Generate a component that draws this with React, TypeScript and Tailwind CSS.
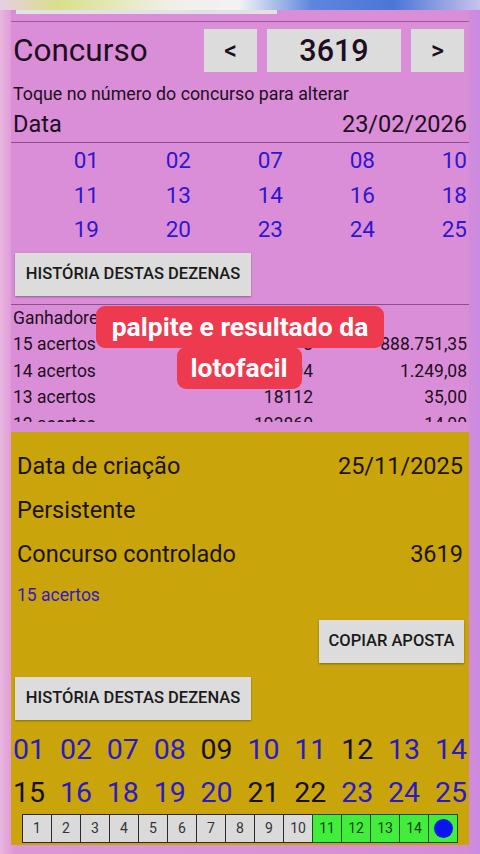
import React from "react";

const drawn = ["01", "02", "07", "08", "10", "11", "13", "14", "16", "18", "19", "20", "23", "24", "25"];

const winners = [
  { label: "15 acertos", qty: "3", prize: "888.751,35" },
  { label: "14 acertos", qty: "304", prize: "1.249,08" },
  { label: "13 acertos", qty: "18112", prize: "35,00" },
  { label: "12 acertos", qty: "193860", prize: "14,00" },
];

const firstRow = ["01", "02", "07", "08", "09", "10", "11", "12", "13", "14"];
const secondRow = ["15", "16", "18", "19", "20", "21", "22", "23", "24", "25"];

function GreyButton({ label, className }: { label: string; className: string }) {
  return (
    <div
      className={`flex items-center justify-center bg-[#dcdcdc] text-[16.5px] font-medium text-[#1a1a1a] shadow-[0_1px_2px_rgba(0,0,0,0.35)] ${className}`}
    >
      {label}
    </div>
  );
}

function NumberRow({ nums }: { nums: string[] }) {
  return (
    <div className="flex justify-between px-[2px] text-[28.5px] leading-[43px]">
      {nums.map((n) => (
        <span key={n} className={drawn.includes(n) ? "text-[#2a1bc4]" : "text-[#15100a]"}>
          {n}
        </span>
      ))}
    </div>
  );
}

export default function App() {
  return (
    <div className="relative h-[854px] w-[480px] overflow-hidden bg-[linear-gradient(90deg,#e9b6de_0%,#dc96d8_3%,#d993d6_50%,#d68bd9_97%,#c98be0_100%)] font-['Roboto',sans-serif]">
      {/* blurred top strip */}
      <div className="h-[10px] bg-[linear-gradient(90deg,#e6cfe0_0%,#d8e08a_12%,#eef0e6_35%,#f2f2f4_50%,#5f86dc_65%,#4a76d6_82%,#c9c2ee_100%)]" />

      {/* result panel */}
      <div className="mx-[11px] h-[422px] bg-[#db8ed8] text-[#1d0e20]">
        <div className="ml-[5px] h-[4px] w-[261px] bg-[#e4e0e4]" />
        <div className="mt-[7px] h-[1px] bg-[#a35a9e]" />

        <div className="mt-[7px] flex h-[43px] items-center pr-[5px]">
          <span className="pl-[2px] text-[31.5px] leading-none">Concurso</span>
          <div className="ml-auto flex gap-[10px]">
            <div className="flex h-[43px] w-[53px] items-center justify-center bg-[#dcdcdc] text-[25px] font-medium">
              &lt;
            </div>
            <div className="flex h-[43px] w-[134px] items-center justify-center bg-[#dcdcdc] text-[30.5px] font-medium">
              3619
            </div>
            <div className="flex h-[43px] w-[53px] items-center justify-center bg-[#dcdcdc] text-[25px] font-medium">
              &gt;
            </div>
          </div>
        </div>

        <div className="mt-[11px] h-[22px] whitespace-nowrap pl-[2px] text-[17.8px] leading-[22px]">
          Toque no número do concurso para alterar
        </div>

        <div className="mt-[7px] flex h-[26px] items-center justify-between pl-[2px] pr-[2px] text-[23.5px]">
          <span>Data</span>
          <span>23/02/2026</span>
        </div>

        <div className="mt-[4px] h-[1px] bg-[#8f4f8c]" />

        <div className="flex flex-wrap pl-[4px] text-[22.5px] leading-[34.5px] text-[#3116cc]">
          {drawn.map((n, i) => (
            <span key={n} className={`text-right ${i % 5 === 0 ? "w-[84px]" : "w-[92px]"}`}>
              {n}
            </span>
          ))}
        </div>

        <GreyButton label="HISTÓRIA DESTAS DEZENAS" className="ml-[4px] mt-[6px] h-[43px] w-[236px]" />

        <div className="mt-[8px] h-[1px] bg-[#8f4f8c]" />

        <div className="h-[117px] overflow-hidden pl-[2px] pr-[2px] text-[17.5px] leading-[26.5px]">
          <div>Ganhadores</div>
          {winners.map((w) => (
            <div key={w.label} className="flex">
              <span className="w-[160px]">{w.label}</span>
              <span className="w-[140px] text-right">{w.qty}</span>
              <span className="flex-1 text-right">{w.prize}</span>
            </div>
          ))}
        </div>
      </div>

      {/* bet panel */}
      <div className="mx-[11px] h-[413px] bg-[#c9a40a] pt-[20px] text-[#1c1408]">
        <div className="flex h-[30px] items-center justify-between px-[6px] text-[23.5px]">
          <span>Data de criação</span>
          <span>25/11/2025</span>
        </div>
        <div className="mt-[14px] flex h-[30px] items-center px-[6px] text-[23.5px]">Persistente</div>
        <div className="mt-[14px] flex h-[30px] items-center justify-between px-[6px] text-[23.5px]">
          <span>Concurso controlado</span>
          <span>3619</span>
        </div>
        <div className="mt-[15px] h-[20px] px-[6px] text-[17.5px] leading-[20px] text-[#3418c4]">15 acertos</div>

        <div className="mt-[15px] flex justify-end pr-[5px]">
          <GreyButton label="COPIAR APOSTA" className="h-[43px] w-[145px]" />
        </div>
        <GreyButton label="HISTÓRIA DESTAS DEZENAS" className="ml-[4px] mt-[14px] h-[43px] w-[236px]" />

        <div className="mt-[8px]">
          <NumberRow nums={firstRow} />
          <NumberRow nums={secondRow} />
        </div>

        <div className="ml-[11px] flex">
          {Array.from({ length: 15 }, (_, i) => i + 1).map((n) => (
            <div
              key={n}
              className={`-ml-[1px] flex h-[29px] w-[30px] items-center justify-center border text-[14px] first:ml-0 ${
                n > 10 ? "border-[#1e4a1e] bg-[#41ee3c] text-[#143a14]" : "border-[#2a2a2a] bg-[#dadada] text-[#333]"
              }`}
            >
              {n === 15 ? <span className="h-[19px] w-[19px] rounded-full bg-[#0a14f0]" /> : n}
            </div>
          ))}
        </div>
      </div>

      {/* caption overlay */}
      <div className="absolute left-0 right-0 top-[306px] flex flex-col items-center">
        <div className="flex h-[42px] w-[288px] items-center justify-center rounded-[9px] bg-[#ee3a4e] text-[26.5px] font-bold text-white">
          palpite e resultado da
        </div>
        <div className="-mt-[1px] ml-[-2px] flex h-[42px] w-[125px] items-center justify-center rounded-[9px] bg-[#ee3a4e] text-[26.5px] font-bold text-white">
          lotofacil
        </div>
      </div>
    </div>
  );
}
